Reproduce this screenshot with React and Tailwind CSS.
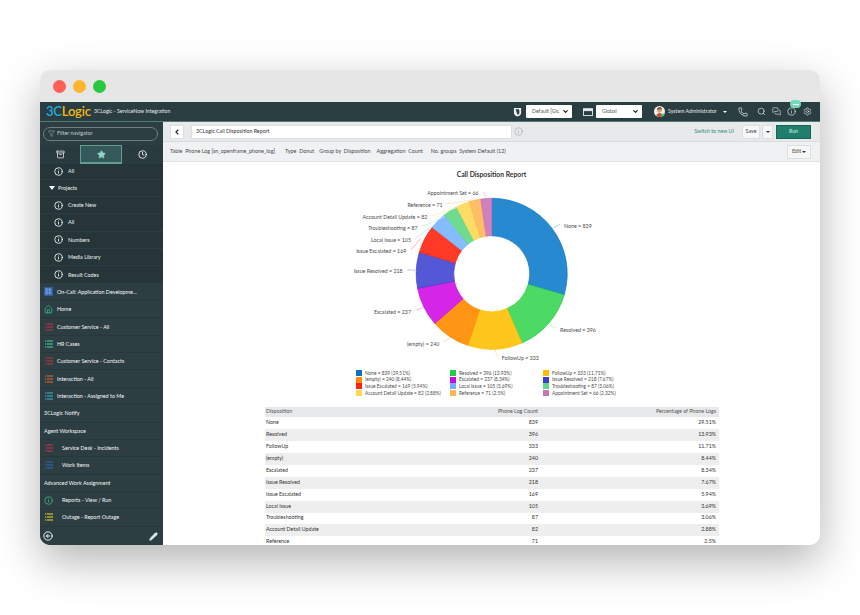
import { ChevronLeft, ChevronDown, Filter, Star, Clock, Archive, Info, Pencil, Phone, Search, Settings, MessagesSquare, CircleArrowLeft, Home, LayoutGrid } from 'lucide-react'

const slices = [
  { name: 'None', n: 839, pct: 29.51, fill: '#278ad1', edge: '#0b72c4', line: '#9ccbee' },
  { name: 'Resolved', n: 396, pct: 13.93, fill: '#4cd964', edge: '#1fcf45', line: '#b2edbc' },
  { name: 'FollowUp', n: 333, pct: 11.71, fill: '#ffc61e', edge: '#ffbe00', line: '#ffe599' },
  { name: '(empty)', n: 240, pct: 8.44, fill: '#ff9415', edge: '#ff8a00', line: '#ffcf99' },
  { name: 'Escalated', n: 237, pct: 8.34, fill: '#d526e8', edge: '#c80de0', line: '#eda6f4' },
  { name: 'Issue Resolved', n: 218, pct: 7.67, fill: '#5458d6', edge: '#3a3ed0', line: '#b0b2ee' },
  { name: 'Issue Escalated', n: 169, pct: 5.94, fill: '#ff3b28', edge: '#ff2310', line: '#ffa69e' },
  { name: 'Local Issue', n: 105, pct: 3.69, fill: '#84bcff', edge: '#70b0ff', line: '#c4deff' },
  { name: 'Troubleshooting', n: 87, pct: 3.06, fill: '#6fdb90', edge: '#5fd682', line: '#c0efcd' },
  { name: 'Account Detail Update', n: 82, pct: 2.88, fill: '#ffdc64', edge: '#ffd850', line: '#ffeeb3' },
  { name: 'Reference', n: 71, pct: 2.5, fill: '#ffbd66', edge: '#ffb655', line: '#ffdeb0' },
  { name: 'Appointment Set', n: 66, pct: 2.32, fill: '#cf80bd', edge: '#ca74b6', line: '#e8bfdf' },
]

const chartLabels = [
  { t: 'None = 839', x: 564, y: 226, a: 'start', l: [552.7, 228, 560, 224.3] },
  { t: 'Resolved = 396', x: 560, y: 330, a: 'start', l: [549.3, 325, 556.7, 328.3] },
  { t: 'FollowUp = 333', x: 501.7, y: 357.7, a: 'start', l: [495, 350, 497.3, 356.7] },
  { t: '(empty) = 240', x: 439.3, y: 344.3, a: 'end', l: [449.3, 337.7, 443.3, 342.3] },
  { t: 'Escalated = 237', x: 411, y: 311.7, a: 'end', l: [422.7, 307.7, 415.3, 310.3] },
  { t: 'Issue Resolved = 218', x: 402.7, y: 271.3, a: 'end', l: [415, 270, 407.3, 270] },
  { t: 'Issue Escalated = 169', x: 406.3, y: 251.3, a: 'end', l: [420.7, 238.7, 410.7, 250] },
  { t: 'Local Issue = 105', x: 411, y: 239.7, a: 'end', l: [432.7, 225, 415, 238.7] },
  { t: 'Troubleshooting = 87', x: 417.7, y: 228, a: 'end', l: [445, 216.7, 421.7, 226.7] },
  { t: 'Account Detail Update = 82', x: 427.3, y: 216.7, a: 'end', l: [456.7, 207.7, 431, 216] },
  { t: 'Reference = 71', x: 442.7, y: 204.7, a: 'end', l: [471.7, 200, 445, 204] },
  { t: 'Appointment Set = 66', x: 478.7, y: 193.3, a: 'end', l: [486, 197.3, 483.3, 192] },
]

function slicePath(from, to) {
  const cx = 491.7, cy = 273.8, R = 75.5, r = 38
  const p = (rad, deg) => {
    const a = (deg - 90) * Math.PI / 180
    return `${(cx + rad * Math.cos(a)).toFixed(2)} ${(cy + rad * Math.sin(a)).toFixed(2)}`
  }
  const big = to - from > 180 ? 1 : 0
  return `M${p(R, from)}A${R} ${R} 0 ${big} 1 ${p(R, to)}L${p(r, to)}A${r} ${r} 0 ${big} 0 ${p(r, from)}Z`
}

function Donut() {
  const total = slices.reduce((s, x) => s + x.pct, 0)
  let at = 0
  return (
    <svg viewBox="332 183 320 183" className="block w-[320px] h-[183px] shrink-0">
      {slices.map((s) => {
        const from = at
        at += (s.pct / total) * 360
        return <path key={s.name} d={slicePath(from, at)} fill={s.fill} stroke={s.edge} strokeWidth="0.7" />
      })}
      {chartLabels.map((c, i) => (
        <g key={c.t}>
          <line x1={c.l[0]} y1={c.l[1]} x2={c.l[2]} y2={c.l[3]} stroke={slices[i].line} strokeWidth="0.8" />
          <text x={c.x} y={c.y + 1.9} textAnchor={c.a} fontSize="5.3" fill="#4d4d4d">{c.t}</text>
        </g>
      ))}
    </svg>
  )
}

function ListGlyph({ color }) {
  return (
    <svg viewBox="0 0 8 8" className="w-[8px] h-[8px] shrink-0">
      <rect x="0" y="0.4" width="1.3" height="1.2" fill={color} />
      <rect x="2" y="0.4" width="6" height="1.2" fill={color} />
      <rect x="0" y="3.4" width="1.3" height="1.2" fill={color} />
      <rect x="2" y="3.4" width="6" height="1.2" fill={color} />
      <rect x="0" y="6.4" width="1.3" height="1.2" fill={color} />
      <rect x="2" y="6.4" width="6" height="1.2" fill={color} />
    </svg>
  )
}

function SubRow({ label, short }) {
  return (
    <div className={`flex items-center pl-[14px] gap-[5px] border-b border-[#2d3d41] bg-[#253538] text-[5.4px] text-[#f0f3f3] shrink-0 ${short ? 'h-[15.700px]' : 'h-[17.35px]'}`}>
      <Info className="w-[9px] h-[9px] text-white" strokeWidth={2.2} />
      <span>{label}</span>
    </div>
  )
}

function NavRow({ label, icon, wide }) {
  return (
    <div className={`flex items-center h-[17.35px] shrink-0 pl-[4px] border-b border-[#28373b] bg-[#2d3e43] text-[5.4px] text-[#f4f6f6] ${wide ? 'gap-[9px]' : 'gap-[4px]'}`}>
      {icon}
      <span>{label}</span>
    </div>
  )
}

function Sidebar() {
  return (
    <aside className="w-[123px] shrink-0 flex flex-col bg-[#2d3e43] overflow-hidden">
      <div className="h-[23px] shrink-0 flex items-center px-[3px]">
        <div className="w-[115px] h-[14px] rounded-full border border-[#6d7f80] flex items-center gap-[2px] px-[4px] text-[5.4px] text-[#c3cccd]">
          <Filter className="w-[7px] h-[7px]" strokeWidth={1.5} />
          <span>Filter navigator</span>
        </div>
      </div>
      <div className="h-[19px] shrink-0 flex items-center pl-[16px] bg-[#2a3b3f]">
        <Archive className="w-[9px] h-[9px] text-white" strokeWidth={1.8} />
        <div className="w-[42px] h-[19px] ml-[15px] flex items-center justify-center bg-[#35595a] border border-[#5f9d8e] border-b-2">
          <Star className="w-[9px] h-[9px] text-[#8fd8c5] fill-[#8fd8c5]" />
        </div>
        <Clock className="ml-[16px] w-[9px] h-[9px] text-white" strokeWidth={2.2} />
      </div>
      <div className="flex-1 flex flex-col overflow-hidden">
        <SubRow label="All" short />
        <div className="flex items-center h-[17.35px] shrink-0 pl-[9px] gap-[3px] border-b border-[#2d3d41] bg-[#253538] text-[5.4px] text-[#f0f3f3]">
          <span className="w-0 h-0 border-x-[3px] border-x-transparent border-t-[4px] border-t-white"></span>
          <span>Projects</span>
        </div>
        <SubRow label="Create New" />
        <SubRow label="All" />
        <SubRow label="Numbers" />
        <SubRow label="Media Library" />
        <SubRow label="Result Codes" />
        <NavRow label="On-Call: Application Developme..." icon={<span className="w-[9px] h-[9px] bg-[#2f5ea8] flex items-center justify-center shrink-0"><LayoutGrid className="w-[7px] h-[7px] text-[#a9c6ef]" /></span>} />
        <NavRow label="Home" icon={<Home className="w-[9px] h-[9px] text-[#2fb48d] shrink-0" strokeWidth={2.2} />} />
        <NavRow label="Customer Service - All" icon={<span className="ml-px"><ListGlyph color="#b23347" /></span>} />
        <NavRow label="HR Cases" icon={<span className="ml-px"><ListGlyph color="#3fbf93" /></span>} />
        <NavRow label="Customer Service - Contacts" icon={<span className="ml-px"><ListGlyph color="#a83a3a" /></span>} />
        <NavRow label="Interaction - All" icon={<span className="ml-px"><ListGlyph color="#d0622b" /></span>} />
        <NavRow label="Interaction - Assigned to Me" icon={<span className="ml-px"><ListGlyph color="#3aa6b5" /></span>} />
        <NavRow label="3CLogic Notify" />
        <NavRow label="Agent Workspace" />
        <NavRow wide label="Service Desk - Incidents" icon={<span className="ml-px"><ListGlyph color="#b8323f" /></span>} />
        <NavRow wide label="Work Items" icon={<span className="ml-px"><ListGlyph color="#2f62b5" /></span>} />
        <NavRow label="Advanced Work Assignment" />
        <NavRow wide label="Reports - View / Run" icon={<Info className="w-[9px] h-[9px] text-[#37c08f] shrink-0" strokeWidth={2} />} />
        <NavRow wide label="Outage - Report Outage" icon={<span className="ml-px"><ListGlyph color="#d4c22d" /></span>} />
      </div>
      <div className="h-[18px] shrink-0 flex items-center justify-between pl-[3px] pr-[5px] bg-[#2d3e43]">
        <CircleArrowLeft className="w-[10px] h-[10px] text-white" strokeWidth={2.2} />
        <Pencil className="w-[9px] h-[9px] text-[#e4e9ea] fill-[#e4e9ea]" />
      </div>
    </aside>
  )
}

function SelectBox({ label, w }) {
  return (
    <div className={`${w} h-[13px] bg-white rounded-[1px] flex items-center justify-between pl-[6px] pr-[3px] text-[5.2px] text-[#555]`}>
      <span>{label}</span>
      <ChevronDown className="w-[7px] h-[7px] text-[#222]" strokeWidth={4} />
    </div>
  )
}

function Header() {
  return (
    <header className="h-[20px] shrink-0 flex items-center bg-[#2a3d41] border-b border-[#4c7f72] pl-[6px] pr-[8px]">
      <span className="w-[44px] text-[13px] font-semibold leading-none tracking-[-0.2px] whitespace-nowrap">
        <span className="text-[#29a9e0]">3C</span><span className="text-[#f4b71d]">Logic</span>
      </span>
      <span className="ml-[4px] text-[5.2px] text-[#e6ebec]">3CLogic - ServiceNow Integration</span>
      <div className="ml-auto flex items-center">
        <svg viewBox="0 0 10 11" className="w-[9px] h-[10px] mr-[4px]">
          <path d="M1 1h8v5.5c0 2-2 3.2-4 4-2-.8-4-2-4-4z" fill="#e8ecec" />
          <path d="M3 2.5h2.5c1 0 1.500.6 1.500 1.500v2.500c0 .8-1 1.500-2 2z" fill="#2a3d41" />
        </svg>
        <SelectBox label="Default [Glc" w="w-[46px]" />
        <svg viewBox="0 0 11 9" className="w-[10px] h-[8px] ml-[11px] mr-[3px]" fill="none" stroke="#e8ecec" strokeWidth="1">
          <rect x="0.5" y="1" width="10" height="7.5" />
          <rect x="0.5" y="1" width="10" height="2" fill="#e8ecec" />
        </svg>
        <SelectBox label="Global" w="w-[46px]" />
        <svg viewBox="0 0 12 12" className="w-[11px] h-[11px] ml-[12px]">
          <circle cx="6" cy="6" r="6" fill="#f3f0ea" />
          <circle cx="6" cy="4.8" r="2.6" fill="#d9a27e" />
          <path d="M3.2 4.2c0-2 1.6-3 3-3s2.6 1 2.6 3c-1-1-3.600-1-5.600 0z" fill="#7a5236" />
          <path d="M2.500 11c.5-2.500 2-3.300 3.500-3.300s3 .8 3.500 3.300c-2 1.300-5 1.300-7 0z" fill="#b5533a" />
          <circle cx="9.800" cy="9.800" r="1.500" fill="#3ccf7a" />
        </svg>
        <span className="ml-[3px] w-[51px] whitespace-nowrap text-[5.2px] text-[#e6ebec]">System Administrator</span>
        <span className="ml-[4px] w-0 h-0 border-x-[2px] border-x-transparent border-t-[2.500px] border-t-white"></span>
        <Phone className="ml-[11px] w-[10px] h-[10px] text-white" strokeWidth={1.6} />
        <Search className="ml-[9px] w-[9px] h-[9px] text-white" strokeWidth={1.6} />
        <MessagesSquare className="ml-[6px] w-[9px] h-[9px] text-white" strokeWidth={1.4} />
        <div className="relative ml-[6px]">
          <Info className="w-[9px] h-[9px] text-white" strokeWidth={1.6} />
          <span className="absolute -top-[7px] left-[3px] w-[11px] h-[8px] rounded-full bg-[#74d9b8] flex items-center justify-center">
            <span className="w-[6px] h-px bg-white"></span>
          </span>
        </div>
        <Settings className="ml-[7px] w-[9px] h-[9px] text-white" strokeWidth={1.4} />
      </div>
    </header>
  )
}

function ReportBars() {
  return (
    <>
      <div className="h-[20px] shrink-0 flex items-center pl-[7px] pr-[9px] bg-[#e7e9ea] border-b border-[#d9dcdd]">
        <button className="w-[14px] h-[14px] bg-white border border-[#dcdfe0] rounded-[1px] flex items-center justify-center">
          <ChevronLeft className="w-[8px] h-[8px] text-[#222]" strokeWidth={3.5} />
        </button>
        <div className="ml-[7px] w-[321px] h-[14px] bg-white border border-[#dcdfe0] rounded-[1px] flex items-center pl-[4px] text-[5.3px] text-[#333]">
          3CLogic Call Disposition Report
        </div>
        <Info className="ml-[2px] w-[9px] h-[9px] text-[#9aa0a2]" strokeWidth={1.4} />
        <span className="ml-auto text-[5.3px] text-[#2f8d76]">Switch to new UI</span>
        <div className="ml-[8px] w-[18px] h-[14px] bg-[#f6f7f7] border border-[#dcdfe0] flex items-center justify-center text-[5.3px] text-[#444]">Save</div>
        <div className="ml-[2px] w-[11px] h-[14px] bg-[#f6f7f7] border border-[#dcdfe0] flex items-center justify-center">
          <span className="w-0 h-0 border-x-[2px] border-x-transparent border-t-[2.500px] border-t-[#333]"></span>
        </div>
        <div className="ml-[3px] w-[35px] h-[14px] bg-[#1f7f6c] border border-[#176454] flex items-center justify-center text-[5.3px] text-[#d8efe9]">Run</div>
      </div>
      <div className="h-[20px] shrink-0 flex items-center pl-[7px] pr-[9px] bg-[#f0f1f2] border-b border-[#dfe1e2] text-[5.4px] text-[#4a4a4a]">
        <span className="mr-[10px]">Table&nbsp; Phone Log [sn_openframe_phone_log]</span>
        <span className="mr-[5px]">Type&nbsp; Donut</span>
        <span className="mr-[6px]">Group by&nbsp; Disposition</span>
        <span className="mr-[8px]">Aggregation&nbsp; Count</span>
        <span>No. groups&nbsp; System Default (12)</span>
        <div className="ml-auto w-[24px] h-[14px] bg-[#f6f7f7] border border-[#dcdfe0] flex items-center justify-center gap-px">
          <span>Edit</span>
          <span className="w-0 h-0 border-x-[2px] border-x-transparent border-t-[2.500px] border-t-[#333]"></span>
        </div>
      </div>
    </>
  )
}

function Legend() {
  return (
    <div className="shrink-0 mt-[4px] ml-[193px] w-[300px] grid grid-cols-[94px_93px_1fr] auto-rows-[6.600px] text-[4.800px] text-[#4d4d4d]">
      {slices.map((s) => (
        <div key={s.name} className="flex items-center gap-[3px] whitespace-nowrap leading-none">
          <span className="w-[6px] h-[6px] shrink-0" style={{ backgroundColor: s.edge }}></span>
          <span>{s.name} = {s.n} ({s.pct}%)</span>
        </div>
      ))}
    </div>
  )
}

function Table() {
  return (
    <div className="shrink-0 mt-[11px] ml-[102px] w-[454px] text-[5.300px] text-[#333]">
      <div className="grid grid-cols-[272px_178px] h-[10px] items-center bg-[#e7e8ea] pl-[1px] pr-[4px] text-[#555]">
        <div className="flex justify-between">
          <span>Disposition</span>
          <span>Phone Log Count</span>
        </div>
        <span className="text-right">Percentage of Phone Logs</span>
      </div>
      {slices.slice(0, 11).map((s, i) => (
        <div key={s.name} className={`grid grid-cols-[272px_178px] h-[11.900px] items-center pl-[1px] pr-[4px] ${i % 2 ? 'bg-[#eeeeef]' : 'bg-white'}`}>
          <div className="flex justify-between">
            <span>{s.name}</span>
            <span>{s.n}</span>
          </div>
          <span className="text-right">{s.pct}%</span>
        </div>
      ))}
    </div>
  )
}

export default function App() {
  return (
    <div className="w-[860px] h-[615px] bg-white pt-[70px] pl-[40px] overflow-hidden font-['Lato','Liberation_Sans',sans-serif]">
      <div className="w-[780px] h-[475px] rounded-[10px] overflow-hidden flex flex-col bg-white shadow-[0_16px_44px_rgba(0,0,0,0.3)]">
        <div className="h-[32px] shrink-0 bg-[#e6e6e6] flex items-center pl-[13px] gap-[7px]">
          <span className="w-[13px] h-[13px] rounded-full bg-[#ff5f57]"></span>
          <span className="w-[13px] h-[13px] rounded-full bg-[#ffb52e]"></span>
          <span className="w-[13px] h-[13px] rounded-full bg-[#28c840]"></span>
        </div>
        <Header />
        <div className="flex-1 flex min-h-0">
          <Sidebar />
          <main className="flex-1 flex flex-col min-w-0 overflow-hidden">
            <ReportBars />
            <h1 className="shrink-0 h-[21px] pt-[4px] flex items-center justify-center text-[6.800px] font-bold text-[#333]">Call Disposition Report</h1>
            <div className="shrink-0 ml-[169px]">
              <Donut />
            </div>
            <Legend />
            <Table />
          </main>
        </div>
      </div>
    </div>
  )
}
